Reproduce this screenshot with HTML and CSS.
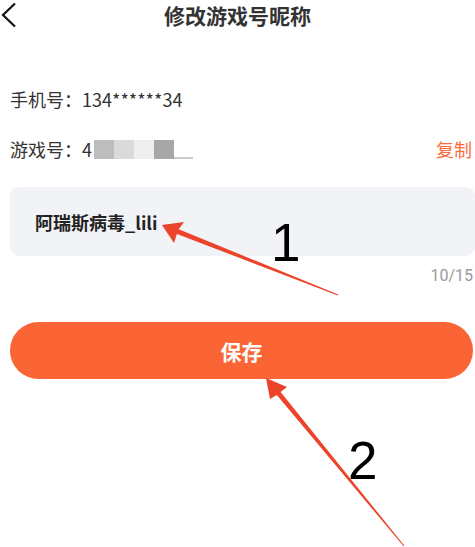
FILE: index.html
```html
<!DOCTYPE html>
<html lang="zh-CN">
<head>
<meta charset="utf-8">
<title>修改游戏号昵称</title>
<link rel="stylesheet" href="styles.css">
</head>
<body>
<div class="page">
  <header class="header">
    <svg class="back" width="16" height="26" viewBox="0 0 16 26"><polyline points="14,2.5 2,14 14,25.5" fill="none" stroke="#111" stroke-width="2.2"/></svg>
    <h1 class="title">修改游戏号昵称</h1>
  </header>
  <main class="content">
    <div class="row">手机号：134******34</div>
    <div class="row row-id">
      <span class="id">游戏号：4<span class="mask m1"></span><span class="mask m2"></span><span class="mask m3"></span><span class="mask m4"></span><span class="mask m5"></span></span>
      <span class="copy">复制</span>
    </div>
    <div class="input">阿瑞斯病毒_lili</div>
    <div class="counter">10/15</div>
    <div class="btn">保存</div>
  </main>
  <svg class="annot" width="475" height="547" viewBox="0 0 475 547">
    <polygon fill="#ec432b" points="162,225 184,222 178.7,229.3 338.2,294.5 337.8,295.5 176.9,233.9 174,243"/>
    <polygon fill="#ec432b" points="266,378 287,387 280.6,391.9 404.4,545.7 403.6,546.3 276.8,395.1 270,399"/>
    <text x="271" y="261" class="num">1</text>
    <text x="348" y="479" class="num">2</text>
  </svg>
</div>
</body>
</html>
```
FILE: styles.css
```css
html, body {
  margin: 0;
  padding: 0;
  background: #fff;
}
body {
  font-family: "Noto Sans CJK SC", "Noto Sans", Roboto, sans-serif;
  color: #333;
}
.page {
  position: relative;
  width: 475px;
  height: 547px;
  overflow: hidden;
}
.header {
  position: relative;
  height: 30px;
  display: flex;
  align-items: center;
  justify-content: center;
}
.back {
  position: absolute;
  left: 1px;
  top: 1px;
}
.title {
  margin: 0;
  font-size: 21px;
  font-weight: bold;
  line-height: 30px;
  color: #333;
}
.content {
  padding: 44px 2px 0 10px;
  display: flex;
  flex-direction: column;
}
.row {
  height: 50px;
  display: flex;
  align-items: center;
  font-size: 18px;
  line-height: 20px;
  color: #333;
}
.row-id {
  justify-content: space-between;
}
.id {
  display: flex;
  align-items: center;
}
.mask {
  display: inline-block;
  width: 20px;
  height: 19px;
}
.m1 { margin-left: 2px; background: #bdbdbd; }
.m2 { background: #dadada; }
.m3 { background: #efefef; }
.m4 { background: #a7a7a7; }
.m5 { width: 19px; height: 19px; box-sizing: border-box; border-bottom: 2px solid #cbcbcb; }
.copy {
  font-size: 18px;
  color: #fa6b3d;
  margin-right: 1px;
}
.input {
  margin-top: 13px;
  height: 69px;
  margin-right: -2px;
  box-sizing: border-box;
  background: #f2f3f7;
  border-radius: 9px;
  display: flex;
  align-items: center;
  padding-left: 25px;
  font-size: 18px;
  font-weight: bold;
  color: #222;
}
.counter {
  margin-top: 10px;
  height: 20px;
  line-height: 20px;
  text-align: right;
  font-size: 16px;
  color: #999;
  font-family: Roboto, "Noto Sans", sans-serif;
}
.btn {
  margin-top: 36px;
  height: 57px;
  border-radius: 29px;
  background: #fb6535;
  color: #fff;
  font-size: 21px;
  font-weight: bold;
  display: flex;
  align-items: center;
  justify-content: center;
}
.annot {
  position: absolute;
  left: 0;
  top: 0;
}
.num {
  font-family: "Liberation Sans", Arial, sans-serif;
  font-size: 53px;
  fill: #000;
}
```
